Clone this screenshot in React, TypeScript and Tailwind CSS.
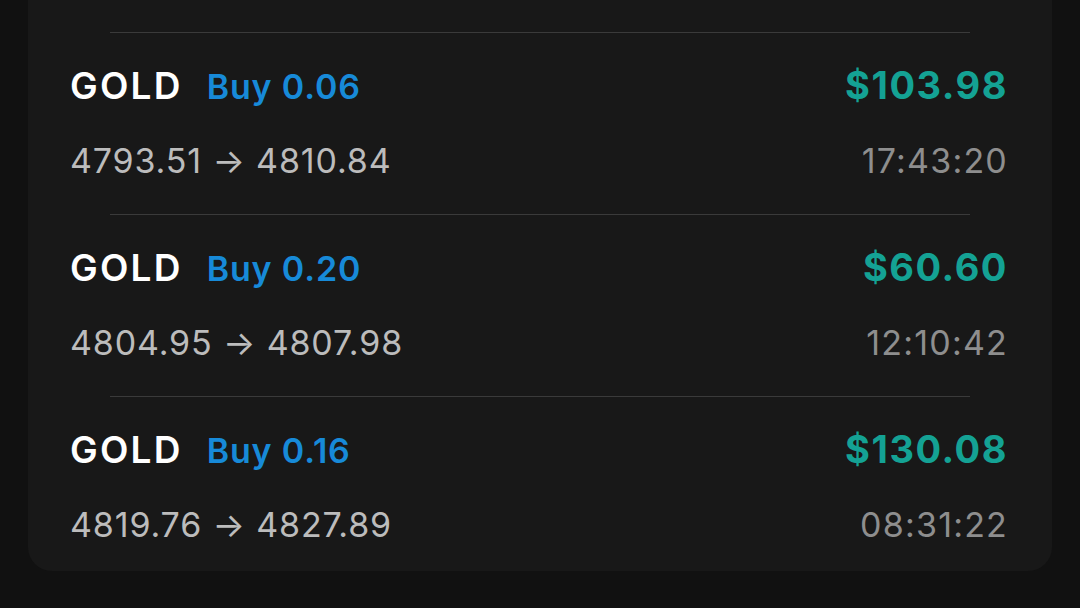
import React from "react";

const trades = [
  { sym: "GOLD", side: "Buy 0.06", pnl: "$103.98", open: "4793.51", close: "4810.84", time: "17:43:20" },
  { sym: "GOLD", side: "Buy 0.20", pnl: "$60.60", open: "4804.95", close: "4807.98", time: "12:10:42" },
  { sym: "GOLD", side: "Buy 0.16", pnl: "$130.08", open: "4819.76", close: "4827.89", time: "08:31:22" },
];

export default function App() {
  return (
    <div
      className="w-[1080px] h-[608px] bg-[#111111] overflow-hidden"
      style={{ fontFamily: "Inter, 'Noto Sans', sans-serif" }}
    >
      <div className="mx-[28px] bg-[#181818] rounded-b-[24px] pt-[32px]">
        {trades.map((t, i) => (
          <div key={i}>
            <div className="h-px mx-[82px] bg-[#3a3a3a]" />
            <div className={"pl-[42px] pr-[44px] pt-[30px] " + (i === trades.length - 1 ? "pb-[26px]" : "pb-[33px]")}>
              <div className="flex items-baseline justify-between h-[44px] leading-[44px]">
                <div className="flex items-baseline gap-[24px]">
                  <span className="text-[37px] font-semibold text-white tracking-[0.06em]">{t.sym}</span>
                  <span className="text-[34px] font-semibold text-[#178ad8] tracking-[0.025em]">{t.side}</span>
                </div>
                <span className="text-[38px] font-bold text-[#14a294] tracking-[0.04em]">{t.pnl}</span>
              </div>
              <div className="flex items-center justify-between mt-[34px] h-[40px] leading-[40px] text-[34px]">
                <span className="text-[#bcbcbc] tracking-[0.025em]">
                  {t.open} → {t.close}
                </span>
                <span className="text-[#8e8e8e] tracking-[0.035em]">{t.time}</span>
              </div>
            </div>
          </div>
        ))}
      </div>
    </div>
  );
}
